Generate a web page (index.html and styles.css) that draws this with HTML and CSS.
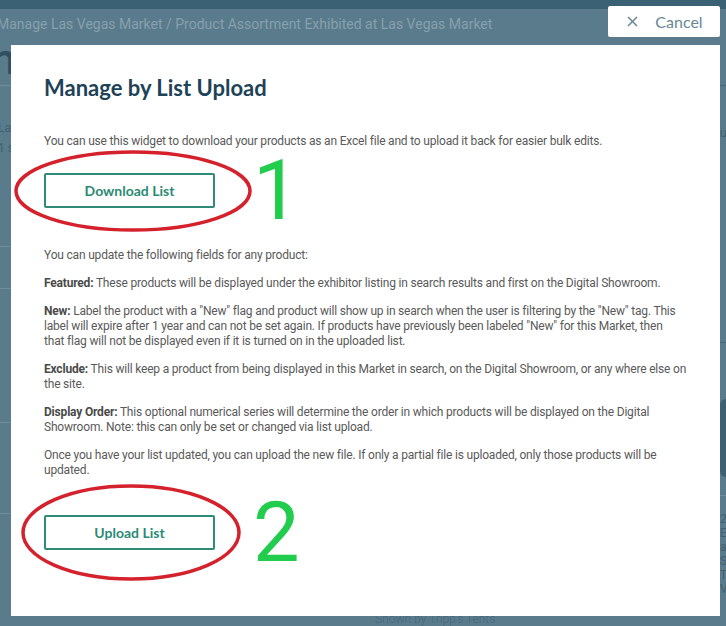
FILE: index.html
```html
<!DOCTYPE html>
<html lang="en">
<head>
  <meta charset="UTF-8" />
  <meta name="viewport" content="width=device-width, initial-scale=1.0"/>
  <title>Manage by List Upload</title>
  <link rel="stylesheet" href="styles.css">
</head>
<body>
  <div class="topbar"></div>
  <div class="crumbs">Manage Las Vegas Market / Product Assortment Exhibited at Las Vegas Market</div>

  <div class="page-body">
    <section class="side">
      <h1 class="side-title">Manage Products</h1>
      <div class="side-row side-text">
        <p>La</p>
        <p>1 s</p>
      </div>
      <div class="side-row short"></div>
      <div class="side-row mid"></div>
      <div class="side-row tall"></div>
    </section>
    <section class="main">
      <div class="main-row head"></div>
      <div class="main-row text"><p>un</p></div>
      <div class="main-row pic"><div class="thumb"></div></div>
      <div class="main-row details">
        <p>2</p><p>E</p><p>a</p><p>S</p><p>T</p><p>V</p>
      </div>
      <div class="shown-by">Shown by Tripp's Tents</div>
    </section>
  </div>

  <button class="cancel-btn">
    <svg width="11" height="11" viewBox="0 0 11 11"><path d="M1 1L10 10M10 1L1 10" stroke="currentColor" stroke-width="1.5" fill="none"/></svg>
    <span>Cancel</span>
  </button>

  <div class="modal">
    <h2 class="modal-title">Manage by List Upload</h2>

    <p>You can use this widget to download your products as an Excel file and to upload it back for easier bulk edits.</p>

    <div class="btn-row first">
      <button class="outline-btn">Download List</button>
      <svg class="ring ring-1" width="238" height="82" viewBox="0 0 238 82"><ellipse cx="119" cy="41" rx="117" ry="39" fill="none" stroke="#d4212b" stroke-width="3.5"/></svg>
      <span class="step-num">1</span>
    </div>

    <p>You can update the following fields for any product:</p>
    <p><b>Featured:</b> These products will be displayed under the exhibitor listing in search results and first on the Digital Showroom.</p>
    <p><b>New:</b> Label the product with a "New" flag and product will show up in search when the user is filtering by the "New" tag. This label will expire after 1 year and can not be set again. If products have previously been labeled "New" for this Market, then<br>that flag will not be displayed even if it is turned on in the uploaded list.</p>
    <p><b>Exclude:</b> This will keep a product from being displayed in this Market in search, on the Digital Showroom, or any where else on the site.</p>
    <p><b>Display Order:</b> This optional numerical series will determine the order in which products will be displayed on the Digital Showroom. Note: this can only be set or changed via list upload.</p>
    <p>Once you have your list updated, you can upload the new file. If only a partial file is uploaded, only those products will be updated.</p>

    <div class="btn-row second">
      <button class="outline-btn">Upload List</button>
      <svg class="ring ring-2" width="220" height="97" viewBox="0 0 220 97"><ellipse cx="110" cy="48.5" rx="108" ry="46.5" fill="none" stroke="#d4212b" stroke-width="3.5"/></svg>
      <span class="step-num">2</span>
    </div>
  </div>
</body>
</html>
```

FILE: styles.css
```css
body {
  margin: 0;
  height: 626px;
  overflow: hidden;
  background-color: #5a7b8c;
  font-family: Roboto, "Liberation Sans", sans-serif;
}

.topbar {
  height: 9px;
  background-color: #3b6175;
}

.crumbs {
  height: 36px;
  box-sizing: border-box;
  padding-top: 5px;
  margin-left: -3px;
  font-size: 14px;
  line-height: 20px;
  color: #86a0ad;
  white-space: nowrap;
}

/* page underneath the dialog */
.page-body {
  display: flex;
  height: 581px;
  overflow: hidden;
}

.side {
  width: 300px;
}

.side-title {
  margin: -14px 0 0 -72px;
  height: 55px;
  font-family: Lato, sans-serif;
  font-size: 44px;
  font-weight: 700;
  color: #2f5062;
  white-space: nowrap;
  border-bottom: 1px solid #6f8d9c;
  box-sizing: border-box;
}

.side-row {
  border-bottom: 1px solid #6f8d9c;
}

.side-text {
  height: 161px;
  padding-top: 37px;
  box-sizing: border-box;
}

.side-text p {
  margin: 0 0 9px -2px;
  font-size: 12px;
  line-height: 11px;
  color: #3f6173;
}

.side-row.short { height: 41px; }
.side-row.mid { height: 133px; }
.side-row.tall { height: 90px; }

.main {
  flex: 1;
  display: flex;
  flex-direction: column;
  align-items: flex-end;
}

.main-row {
  width: 6px;
  border-bottom: 1px solid #46697b;
}

.main-row.head { height: 41px; }

.main-row.text {
  height: 260px;
  box-sizing: border-box;
  padding-top: 40px;
}

.main-row p,
.details p {
  margin: 0;
  font-size: 12px;
  line-height: 14px;
  color: #3f6173;
}

.main-row.pic {
  height: 155px;
  box-sizing: border-box;
  padding-top: 56px;
  border-bottom: 1px solid #6f8d9c;
}

.thumb {
  width: 6px;
  height: 78px;
  border-radius: 8px 0 0 8px;
  background-color: #3f6070;
}

.details {
  border: 0;
  padding-top: 16px;
}

.shown-by {
  align-self: flex-start;
  margin: 16px 0 0 75px;
  font-size: 12px;
  font-weight: 300;
  color: #46697b;
}

/* dialog */
.cancel-btn {
  position: absolute;
  top: 6px;
  right: 6px;
  width: 112px;
  height: 31px;
  display: flex;
  align-items: center;
  justify-content: center;
  gap: 17px;
  padding: 0 0 0 2px;
  border: none;
  border-radius: 2px;
  background-color: #ffffff;
  color: #6a8794;
  font-family: Lato, sans-serif;
  font-size: 16px;
  cursor: pointer;
}

.modal {
  position: absolute;
  top: 45px;
  left: 11px;
  width: 709px;
  box-sizing: border-box;
  padding: 30px 33px 66px;
  background-color: #ffffff;
}

.modal-title {
  margin: 0 0 33px;
  font-family: Lato, sans-serif;
  font-size: 22px;
  line-height: 26px;
  font-weight: 700;
  color: #1e4357;
}

.modal p {
  margin: 0 0 13px;
  font-size: 12px;
  line-height: 15px;
  letter-spacing: -0.19px;
  color: #5a5a5a;
}

.modal p b {
  color: #4a4a4a;
}

.btn-row {
  position: relative;
  display: flex;
  align-items: center;
}

.btn-row.first {
  margin: 24px 0 40px;
}

.btn-row.second {
  margin-top: 37px;
}

.outline-btn {
  width: 171px;
  height: 35px;
  border: 2px solid #2f8b78;
  border-radius: 2px;
  background-color: #ffffff;
  color: #2b8a74;
  font-family: Lato, sans-serif;
  font-size: 14px;
  font-weight: 700;
  cursor: pointer;
}

.ring {
  position: absolute;
}

.ring-1 {
  left: -30px;
  top: -23px;
}

.ring-2 {
  left: -23px;
  top: -31px;
}

.step-num {
  margin-left: 38px;
  font-size: 83px;
  line-height: 35px;
  color: #22cc4c;
}
```
